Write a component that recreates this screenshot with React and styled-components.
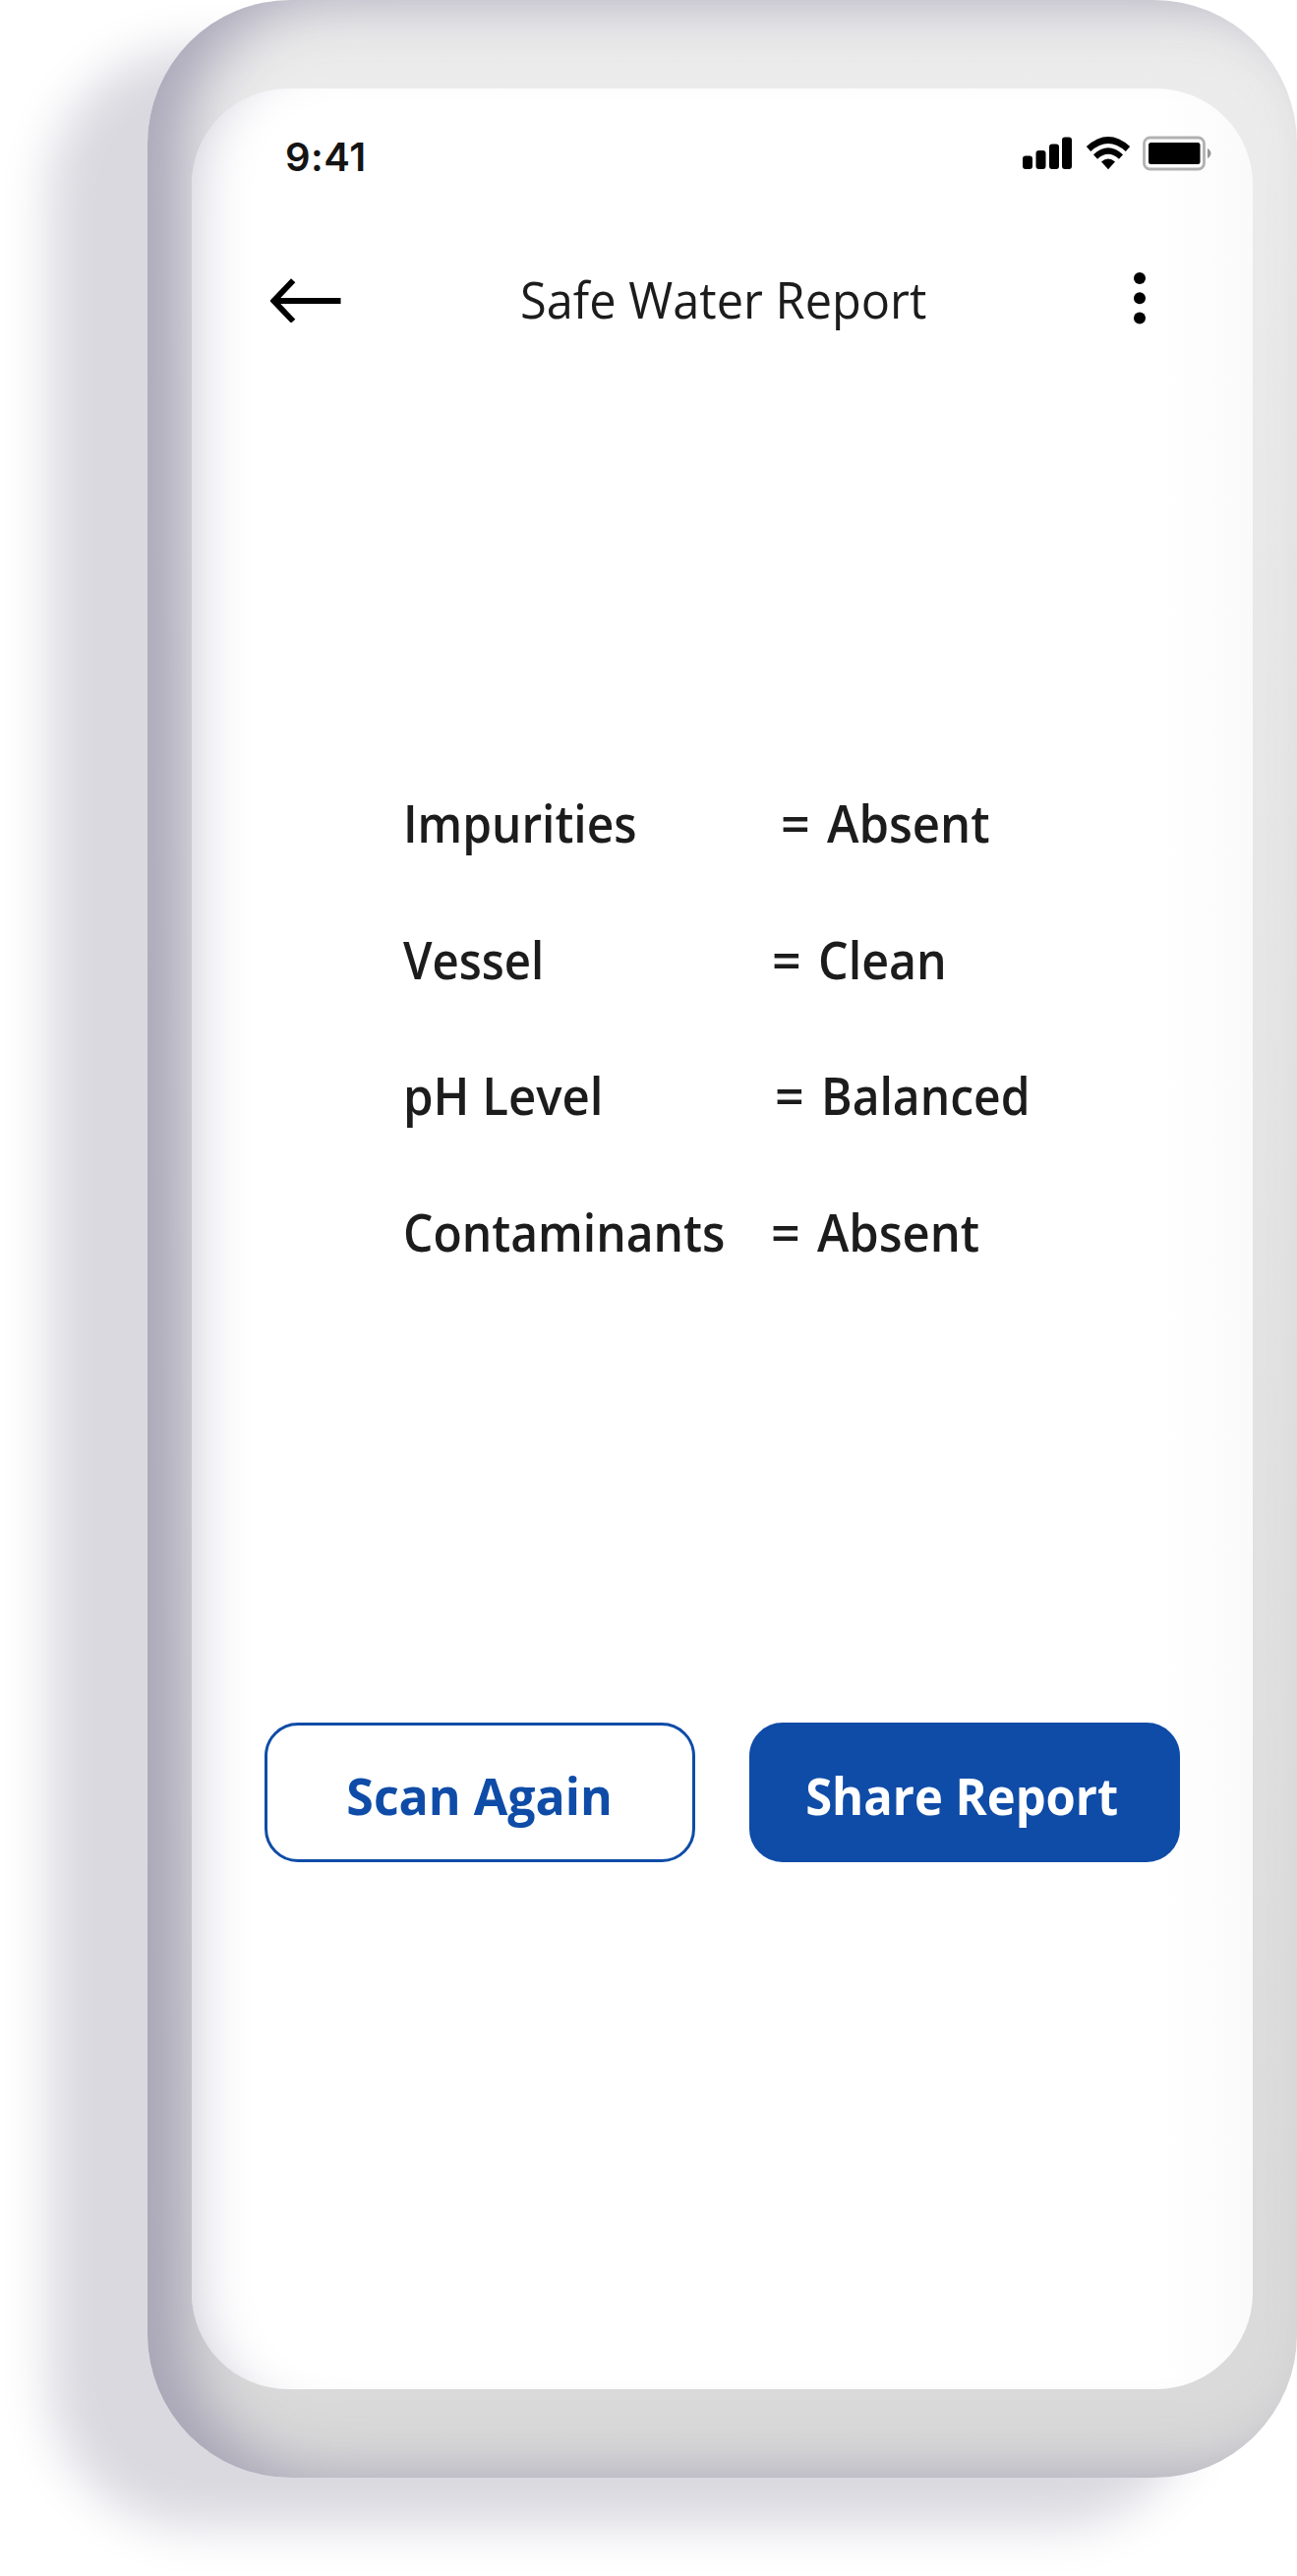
import React from "react";
import styled, { createGlobalStyle } from "styled-components";

const GlobalStyle = createGlobalStyle`
  *, *::before, *::after { box-sizing: border-box; }
  body { margin: 0; background: #fff; }
`;

const Page = styled.main`
  width: 1319px;
  height: 2620px;
  padding: 0 0 100px 150px;
  overflow: hidden;
  background: #fff;
  color: #1c1c1c;
  font-family: "Open Sans", "Noto Sans", sans-serif;
`;

const Frame = styled.div`
  height: 2520px;
  padding: 90px 45px 90px 45px;
  border-radius: 146px;
  background: linear-gradient(180deg, #ececec 0%, #e6e6e6 40%, #d9d9d9 100%);
  box-shadow:
    -100px 50px 50px #dad9e0,
    inset 40px 0 60px rgba(152, 149, 170, 0.78);
`;

const Screen = styled.section`
  display: flex;
  flex-direction: column;
  height: 2340px;
  border-radius: 98px;
  background: linear-gradient(90deg, #fff 91%, #fafafa 100%);
  box-shadow: inset 50px 0 60px -50px #c7c5d3;
`;

const StatusBar = styled.header`
  display: flex;
  justify-content: space-between;
  align-items: center;
  height: 60px;
  margin-top: 38px;
  padding: 0 42px 0 95px;
`;

const Time = styled.span`
  margin-top: 4px;
  font-family: Inter, sans-serif;
  font-size: 40px;
  font-weight: 600;
  line-height: 60px;
  letter-spacing: 0.5px;
  color: #141414;
`;

const StatusIcons = styled.div`
  display: flex;
  align-items: center;
  gap: 12px;
  margin-top: -4px;
`;

const TitleBar = styled.div`
  display: grid;
  grid-template-columns: 72px 1fr 14px;
  align-items: center;
  height: 80px;
  margin-top: 76px;
  padding: 0 108px 0 80px;
`;

const Condensed = styled.span`
  display: inline-block;
  transform: scaleX(${(p) => p.$scale});
  transform-origin: ${(p) => p.$origin || "left"} center;
`;

const Title = styled.h1`
  margin: 0 0 0 182px;
  font-size: 52px;
  font-weight: 400;
  line-height: 80px;
  white-space: nowrap;
`;

const IconButton = styled.button`
  display: flex;
  padding: 0;
  border: 0;
  background: none;
  color: #000;
`;

const Results = styled.dl`
  margin: 424px 0 0;
  padding-left: 215px;
`;

const ResultRow = styled.div`
  display: flex;
  align-items: center;
  height: 138.5px;
  font-size: 52px;
  font-weight: 600;
  line-height: 72px;
  white-space: nowrap;
`;

const Label = styled.dt`
  width: ${(p) => p.$width}px;
`;

const Value = styled.dd`
  display: flex;
  align-items: baseline;
  gap: 19px;
  margin: 0;
`;

const Equals = styled.span`
  width: 28px;
`;

const Actions = styled.div`
  display: flex;
  gap: 55px;
  margin-top: 430px;
  padding-left: 74px;
`;

const ActionButton = styled.button`
  width: 438px;
  height: 142px;
  padding: 6px ${(p) => (p.$primary ? 5 : 0)}px 0 0;
  border: 3px solid #0f4ca7;
  border-radius: 34px;
  background: ${(p) => (p.$primary ? "#0f4ca7" : "transparent")};
  color: ${(p) => (p.$primary ? "#fff" : "#0f4ca7")};
  font-family: inherit;
  font-size: 52px;
  font-weight: 700;
  line-height: 72px;
  white-space: nowrap;
`;

const SignalIcon = () => (
  <svg width="52" height="34" viewBox="0 0 52 34" aria-hidden="true">
    <rect x="0" y="19.5" width="10" height="13.5" rx="3" />
    <rect x="13.5" y="14" width="10" height="19" rx="3" />
    <rect x="27" y="7.5" width="10" height="25.5" rx="3" />
    <rect x="40" y="0.5" width="10" height="32.5" rx="3" />
  </svg>
);

const WifiIcon = () => (
  <svg width="46" height="34" viewBox="0 0 46 34" aria-hidden="true">
    <path d="M3 12.5Q23-5.5 43 12.5" fill="none" stroke="#000" strokeWidth="6.5" />
    <path d="M10 20.5Q23 8.5 36 20.5" fill="none" stroke="#000" strokeWidth="6" />
    <path d="M16 25.6Q23 19.5 30 25.6L23 33.2Z" />
  </svg>
);

const BatteryIcon = () => (
  <svg width="70" height="36" viewBox="0 0 70 36" aria-hidden="true">
    <rect x="1.5" y="2" width="61" height="32" rx="6" fill="none" stroke="#000" strokeOpacity="0.3" strokeWidth="2.8" />
    <rect x="6" y="7" width="52.5" height="22" rx="2.5" />
    <path d="M66 13Q69.5 15 69.5 18T66 23Z" fillOpacity="0.4" />
  </svg>
);

const BackIcon = () => (
  <svg width="73" height="48" viewBox="0 0 73 48" aria-hidden="true">
    <path d="M72.5 26H3M23.5 5L3.5 26L23.5 47" fill="none" stroke="currentColor" strokeWidth="6" />
  </svg>
);

const MoreIcon = () => (
  <svg width="14" height="56" viewBox="0 0 14 56" aria-hidden="true">
    <circle cx="7" cy="7" r="6" />
    <circle cx="7" cy="27.3" r="6" />
    <circle cx="7" cy="47.6" r="6" />
  </svg>
);

const results = [
  { label: "Impurities", value: "Absent", width: 384, labelScale: 0.92, valueScale: 0.943 },
  { label: "Vessel", value: "Clean", width: 375, labelScale: 0.91, valueScale: 0.93 },
  { label: "pH Level", value: "Balanced", width: 378, labelScale: 0.945, valueScale: 0.923 },
  { label: "Contaminants", value: "Absent", width: 374, labelScale: 0.923, valueScale: 0.94 },
];

export default function App() {
  return (
    <>
      <GlobalStyle />
      <Page>
        <Frame>
          <Screen>
            <StatusBar>
              <Time>9:41</Time>
              <StatusIcons>
                <SignalIcon />
                <WifiIcon />
                <BatteryIcon />
              </StatusIcons>
            </StatusBar>
            <TitleBar>
              <IconButton aria-label="Back"><BackIcon /></IconButton>
              <Title><Condensed $scale={0.937}>Safe Water Report</Condensed></Title>
              <IconButton aria-label="More options"><MoreIcon /></IconButton>
            </TitleBar>
            <Results>
              {results.map((r) => (
                <ResultRow key={r.label}>
                  <Label $width={r.width}>
                    <Condensed $scale={r.labelScale}>{r.label}</Condensed>
                  </Label>
                  <Value>
                    <Equals>=</Equals>
                    <Condensed $scale={r.valueScale}>{r.value}</Condensed>
                  </Value>
                </ResultRow>
              ))}
            </Results>
            <Actions>
              <ActionButton>
                <Condensed $scale={0.962} $origin="center">Scan Again</Condensed>
              </ActionButton>
              <ActionButton $primary>
                <Condensed $scale={0.94} $origin="center">Share Report</Condensed>
              </ActionButton>
            </Actions>
          </Screen>
        </Frame>
      </Page>
    </>
  );
}
